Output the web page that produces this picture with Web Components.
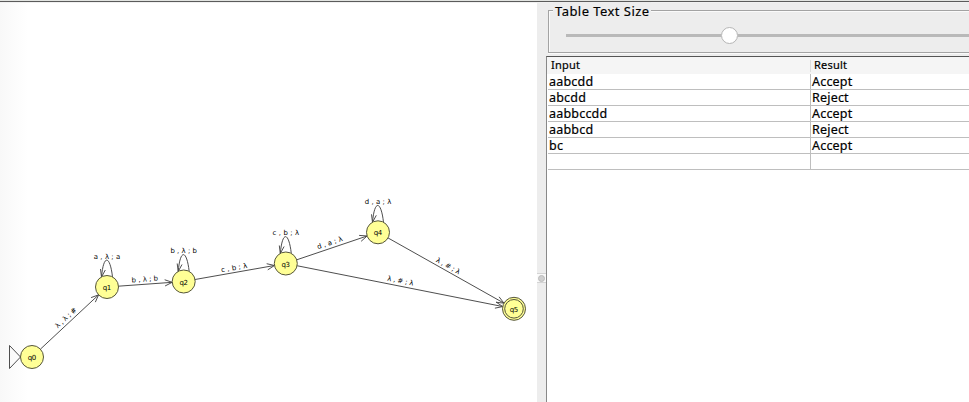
<!DOCTYPE html>
<html lang="en"><head><meta charset="utf-8"><title>Automaton</title>
<style>
html,body{margin:0;height:100%;overflow:hidden;background:#fff}
body{font-family:"Noto Sans","DejaVu Sans",sans-serif;color:#000}
</style></head><body>
<automaton-app></automaton-app>
<script>
const NS=(host,html)=>{host.attachShadow({mode:'open'}).innerHTML=html};

class StateDiagram extends HTMLElement{
  connectedCallback(){
    const nodes=[['q0',32,357],['q1',107,287],['q2',183.7,281.5],['q3',285.8,263.5],['q4',378,232.3],['q5',514,308.8]];
    const edges=[[0,1,'λ , λ ; #',67.5,319.5],[1,2,'b , λ ; b',145,281.5],[2,3,'c , b ; λ',234.5,270],[3,4,'d , a ; λ',330.5,245],[4,5,'λ , # ; λ',447,268],[3,5,'λ , # ; λ',400,283]];
    const loops=[[1,'a , λ ; a'],[2,'b , λ ; b'],[3,'c , b ; λ'],[4,'d , a ; λ']];
    const R=11.5;let s='';
    const label=(t,x,y,a)=>`<text transform="translate(${x} ${y}) rotate(${a})" text-anchor="middle" textLength="26.5" lengthAdjust="spacing">${t}</text>`;
    for(const [a,b,t,lx,ly] of edges){
      const [,x1,y1]=nodes[a],[,x2,y2]=nodes[b],g=Math.atan2(y2-y1,x2-x1),c=Math.cos(g),n=Math.sin(g);
      const ex=x2-R*c,ey=y2-R*n,head=d=>`${ex-8*Math.cos(g+d)} ${ey-8*Math.sin(g+d)}`;
      s+=`<path d="M${x1+R*c} ${y1+R*n}L${ex} ${ey}M${head(.4)}L${ex} ${ey}L${head(-.4)}"/>`+label(t,lx,ly,g*180/Math.PI);
    }
    for(const [i,t] of loops){
      const [,x,y]=nodes[i];
      s+=`<path d="M${x+5.5} ${y-10}C${x+3} ${y-32} ${x-3.5} ${y-33} ${x-5.5} ${y-10}M${x-6.5} ${y-18}L${x-5.5} ${y-10}L${x-1.7} ${y-17}"/>`+label(t,x,y-28.5,0);
    }
    s+='<path d="M20.5 357L9.5 345.5V368.5Z"/>';
    for(const [t,x,y] of nodes){
      s+=`<circle cx="${x}" cy="${y}" r="${R}"/>`+(t==='q5'?`<circle cx="${x}" cy="${y}" r="9.3"/>`:'')+`<text class="n" x="${x}" y="${y+3}" text-anchor="middle" textLength="8.5">${t}</text>`;
    }
    NS(this,`<style>:host{display:block;background:linear-gradient(90deg,#f8f8f8,#fff 28px);overflow:hidden}
    svg{display:block}path{fill:none;stroke:#444;stroke-width:.95}circle{fill:#ffff96;stroke:#55553c;stroke-width:1}
    text{font-family:"DejaVu Sans",sans-serif;font-size:6.9px;fill:#000}.n{font-size:7px}</style>
    <svg width="537" height="399" viewBox="0 3 537 399">${s}</svg>`);
  }
}
class SplitDivider extends HTMLElement{
  connectedCallback(){NS(this,`<style>:host{display:flex;flex-direction:column;background:#ededed;padding-top:270px;box-sizing:border-box}
  div{display:flex;align-items:center;justify-content:center;height:8px;padding-right:1px;background:#fafafa;border:solid #d4d4d4;border-width:1px 0}
  i{width:5px;height:5px;border-radius:50%;background:#d0d0d0;border:.5px solid #bbb}</style><div><i></i></div>`)}
}
class SizeSlider extends HTMLElement{
  connectedCallback(){NS(this,`<style>:host{display:block;height:53px;background:#ededed;padding:7px 0 0 2px;box-sizing:border-box}
  .box{height:43px;box-sizing:border-box;border:1px solid #a3a3a3;border-right:0;box-shadow:inset 1px 1px #fafafa,0 1px #fafafa;display:grid;grid-template-rows:16px 17px;align-items:center}
  .t{justify-self:start;background:#ededed;margin:-17px 0 0 4px;padding:0 1px 0 2px;font-size:13px;line-height:18px;letter-spacing:.45px;-webkit-text-stroke:.15px #000}
  .s{display:grid;grid-template-columns:155px 17px 1fr;align-items:center;margin-left:17px}
  .s i{height:3px;background:#b9b9b9}.s b{height:15px;width:15px;border:1px solid #b5b5b5;border-radius:50%;background:#fff;box-sizing:content-box}</style>
  <div class="box"><span class="t"><slot></slot></span><div class="s"><i></i><b></b><i></i></div></div>`)}
}
class ResultTable extends HTMLElement{
  connectedCallback(){
    const rows=[['aabcdd','Accept'],['abcdd','Reject'],['aabbccdd','Accept'],['aabbcd','Reject'],['bc','Accept'],['','']];
    NS(this,`<style>:host{display:block;background:#fff;border:solid #555;border-width:1px 0 0 1px;border-left-color:#888;box-sizing:border-box}
    .r{display:grid;grid-template-columns:262px 1fr;height:16px;line-height:15px;font-size:12.5px;letter-spacing:.2px;-webkit-text-stroke:.2px #000;margin-left:1px;box-sizing:border-box;border-bottom:1px solid #bebebe}
    .r span{padding-left:1px}.r span+span{border-left:1px solid #bebebe}
    .h{background:#f5f5f5;border:0;height:17px;line-height:15px;font-size:11px;margin:0;grid-template-columns:263px 1fr}.h span{padding-left:4px}.h span+span{padding-left:3px;border-color:#ddd;margin:3px 0 2px;line-height:9px}
    </style><div class="r h"><span>Input</span><span>Result</span></div>${rows.map(r=>`<div class="r"><span>${r[0]}</span><span>${r[1]}</span></div>`).join('')}`);
  }
}
class AutomatonApp extends HTMLElement{
  connectedCallback(){NS(this,`<style>:host{display:grid;width:969px;height:402px;grid-template-rows:3px 399px}
  header{background:linear-gradient(#e2e4e1 1px,#5b5b5b 1px 2px,#f1f1f1 2px)}
  main{display:grid;grid-template-columns:537px 9px 423px}
  section{display:grid;grid-template-rows:53px 346px}</style>
  <header></header><main><state-diagram></state-diagram><split-divider></split-divider><section><size-slider>Table Text Size</size-slider><result-table></result-table></section></main>`)}
}
customElements.define('state-diagram',StateDiagram);
customElements.define('split-divider',SplitDivider);
customElements.define('size-slider',SizeSlider);
customElements.define('result-table',ResultTable);
customElements.define('automaton-app',AutomatonApp);
</script></body></html>
